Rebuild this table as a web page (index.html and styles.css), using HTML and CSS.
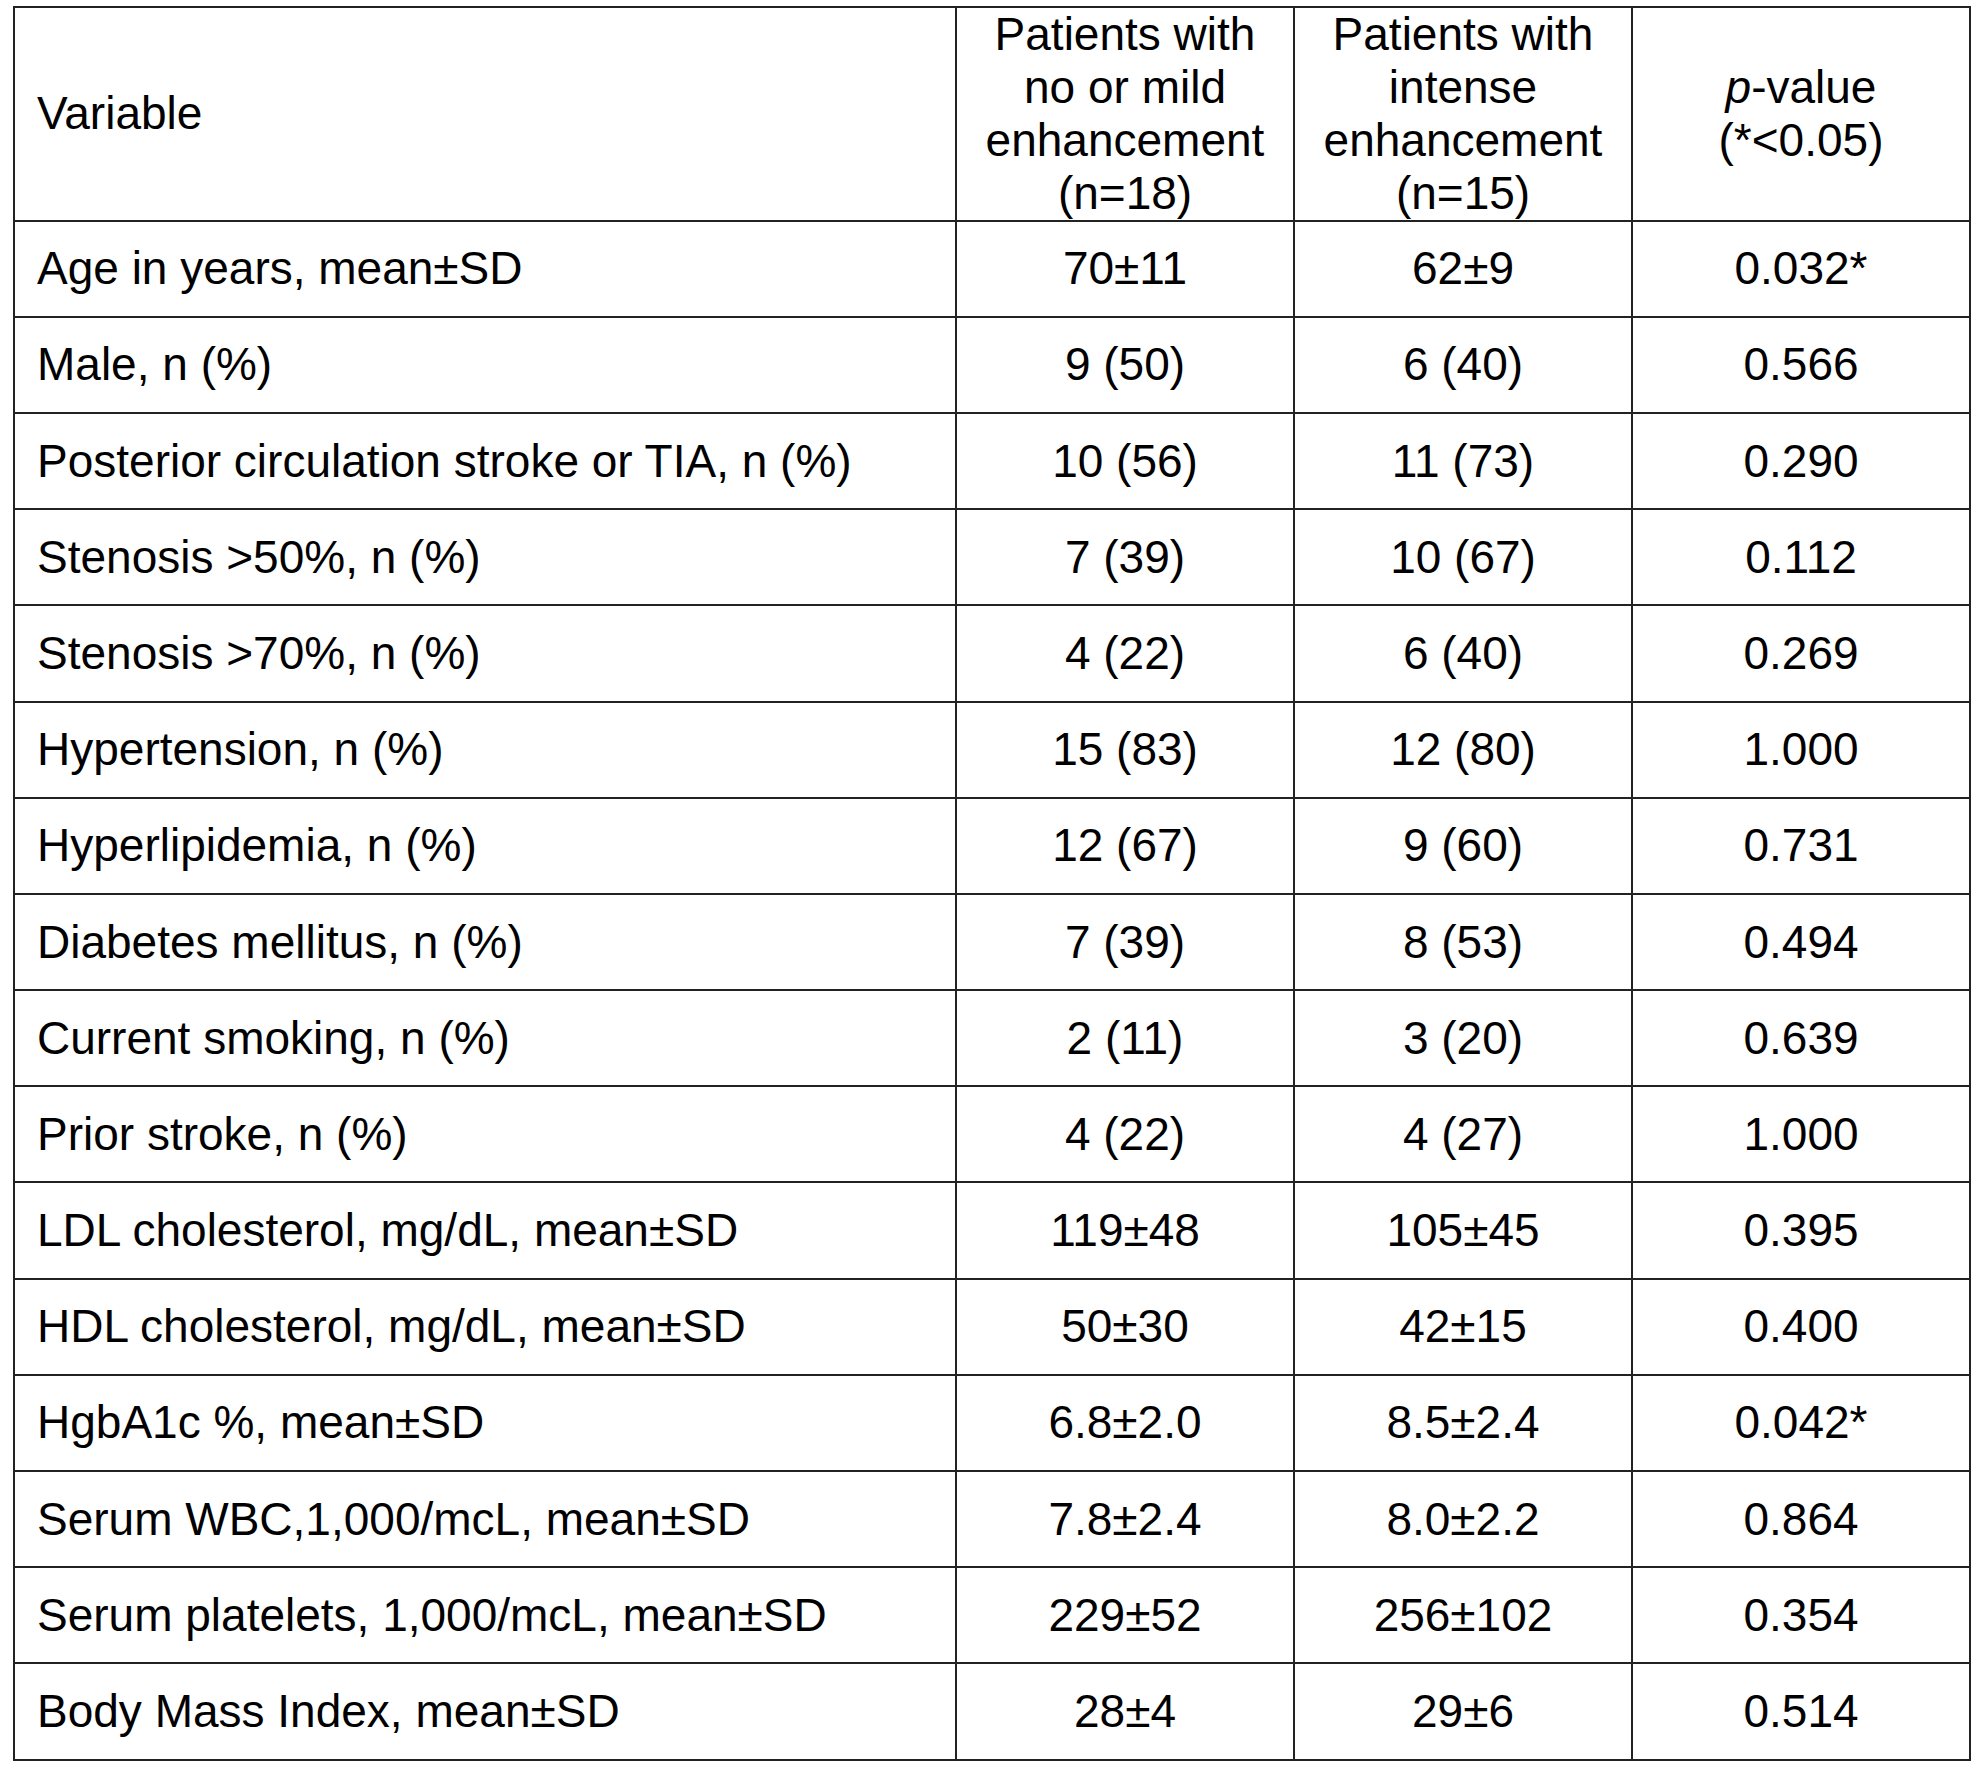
FILE: index.html
```html
<!DOCTYPE html>
<html lang="en">
<head>
<meta charset="utf-8">
<title>Patient characteristics</title>
<link rel="stylesheet" href="styles.css">
</head>
<body>
<table class="data-table">
  <colgroup>
    <col class="col-var">
    <col class="col-num">
    <col class="col-num">
    <col class="col-num">
  </colgroup>
  <thead>
    <tr class="head-row">
      <th class="var">Variable</th>
      <th>Patients with<br>no or mild<br>enhancement<br>(n=18)</th>
      <th>Patients with<br>intense<br>enhancement<br>(n=15)</th>
      <th><i>p</i>-value<br>(*&lt;0.05)</th>
    </tr>
  </thead>
  <tbody>
    <tr><td class="var">Age in years, mean±SD</td><td>70±11</td><td>62±9</td><td>0.032*</td></tr>
    <tr><td class="var">Male, n (%)</td><td>9 (50)</td><td>6 (40)</td><td>0.566</td></tr>
    <tr><td class="var">Posterior circulation stroke or TIA, n (%)</td><td>10 (56)</td><td>11 (73)</td><td>0.290</td></tr>
    <tr><td class="var">Stenosis &gt;50%, n (%)</td><td>7 (39)</td><td>10 (67)</td><td>0.112</td></tr>
    <tr><td class="var">Stenosis &gt;70%, n (%)</td><td>4 (22)</td><td>6 (40)</td><td>0.269</td></tr>
    <tr><td class="var">Hypertension, n (%)</td><td>15 (83)</td><td>12 (80)</td><td>1.000</td></tr>
    <tr><td class="var">Hyperlipidemia, n (%)</td><td>12 (67)</td><td>9 (60)</td><td>0.731</td></tr>
    <tr><td class="var">Diabetes mellitus, n (%)</td><td>7 (39)</td><td>8 (53)</td><td>0.494</td></tr>
    <tr><td class="var">Current smoking, n (%)</td><td>2 (11)</td><td>3 (20)</td><td>0.639</td></tr>
    <tr><td class="var">Prior stroke, n (%)</td><td>4 (22)</td><td>4 (27)</td><td>1.000</td></tr>
    <tr><td class="var">LDL cholesterol, mg/dL, mean±SD</td><td>119±48</td><td>105±45</td><td>0.395</td></tr>
    <tr><td class="var">HDL cholesterol, mg/dL, mean±SD</td><td>50±30</td><td>42±15</td><td>0.400</td></tr>
    <tr><td class="var">HgbA1c %, mean±SD</td><td>6.8±2.0</td><td>8.5±2.4</td><td>0.042*</td></tr>
    <tr><td class="var">Serum WBC,1,000/mcL, mean±SD</td><td>7.8±2.4</td><td>8.0±2.2</td><td>0.864</td></tr>
    <tr><td class="var">Serum platelets, 1,000/mcL, mean±SD</td><td>229±52</td><td>256±102</td><td>0.354</td></tr>
    <tr><td class="var">Body Mass Index, mean±SD</td><td>28±4</td><td>29±6</td><td>0.514</td></tr>
  </tbody>
</table>
</body>
</html>
```

FILE: styles.css
```css
html, body {
  margin: 0;
  padding: 0;
  background: #ffffff;
}

body {
  font-family: "Liberation Sans", Arial, sans-serif;
  font-size: 46px;
  color: #000;
}

.data-table {
  margin: 6px 0 0 13px;
  border-collapse: collapse;
  table-layout: fixed;
  width: 1957px;
}

.col-var { width: 942px; }
.col-num { width: 338px; }

.data-table th,
.data-table td {
  border: 2px solid #222;
  padding: 0 4px;
  text-align: center;
  vertical-align: middle;
  font-weight: normal;
  line-height: 1.15;
}

.head-row th {
  height: 211px;
}

.data-table tbody td {
  height: 94.2px;
}

.data-table .var {
  text-align: left;
  padding-left: 22px;
}
```
